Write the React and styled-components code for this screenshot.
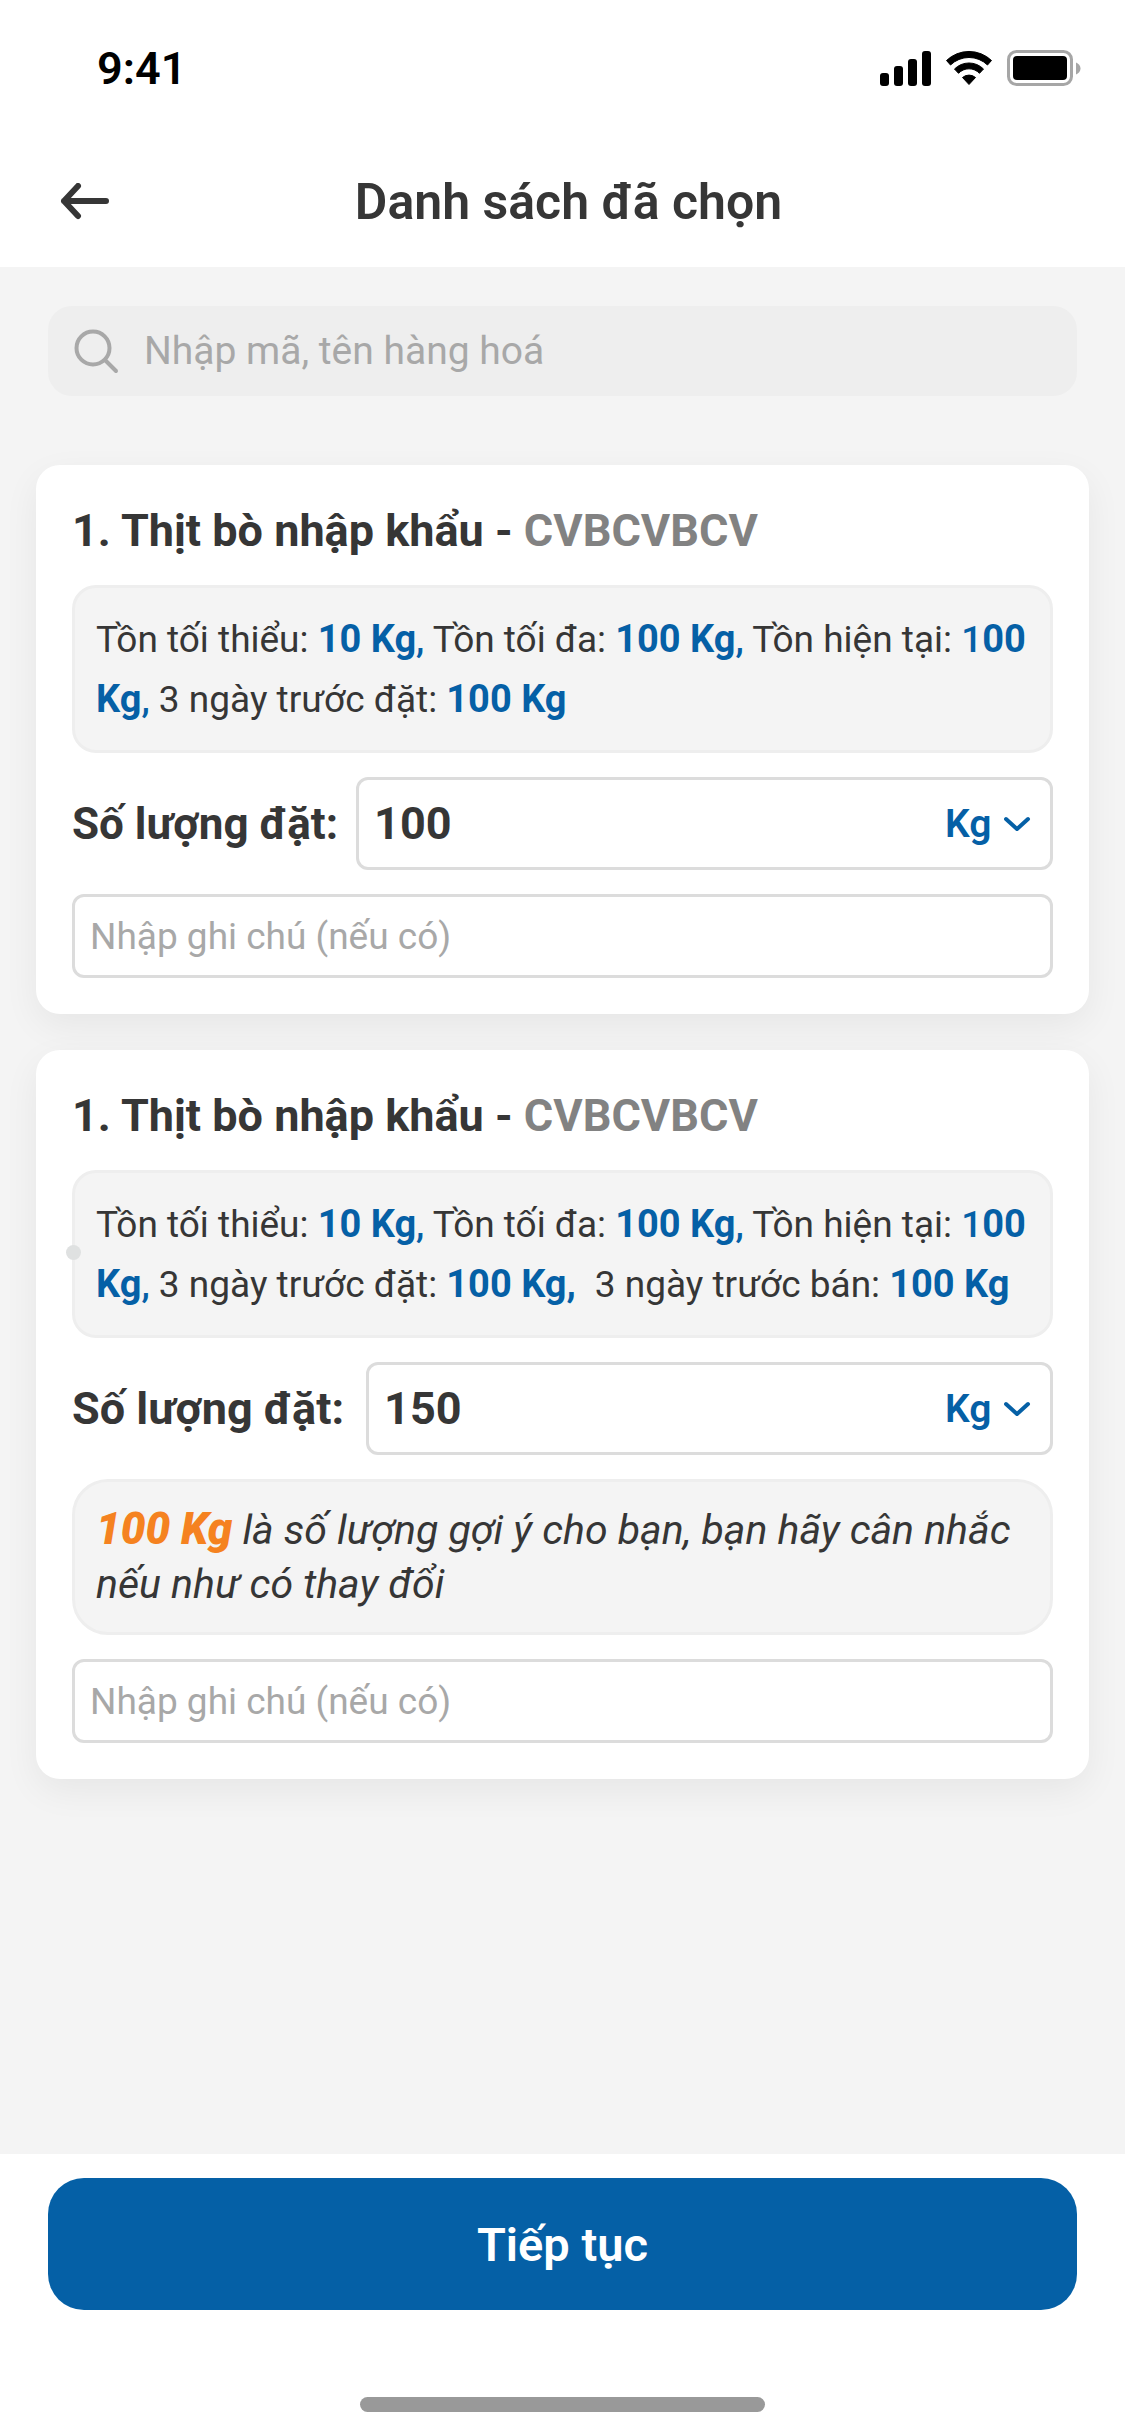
import React, { useState } from 'react'
import styled, { createGlobalStyle } from 'styled-components';

const products = [
  {
    id: 1,
    name: '1. Thịt bò nhập khẩu',
    code: 'CVBCVBCV',
    quantity: '100',
    stockSold: false,
    suggestion: '',
    marker: false,
  },
  {
    id: 2,
    name: '1. Thịt bò nhập khẩu',
    code: 'CVBCVBCV',
    quantity: '150',
    stockSold: true,
    suggestion: '100 Kg',
    marker: true,
  },
];

const StatusIcons = () => (
  <svg width="204" height="36" viewBox="0 0 204 36" aria-hidden="true">
    <rect x="1" y="23" width="9" height="13" rx="3" />
    <rect x="15" y="16" width="9" height="20" rx="3" />
    <rect x="29" y="9" width="9" height="27" rx="3" />
    <rect x="43" y="1" width="9" height="35" rx="3" />
    <path d="M67.5 10.5 A32.5 32.5 0 0 1 112.5 10.5 L108.5 15 A26.5 26.5 0 0 0 71.5 15 Z" strokeWidth="1" stroke="#000" strokeLinejoin="round" />
    <path d="M75.5 19 A20.5 20.5 0 0 1 104.5 19 L100.5 23.3 A14.5 14.5 0 0 0 79.5 23.3 Z" strokeWidth="1" stroke="#000" strokeLinejoin="round" />
    <path d="M83.5 27.5 A10 10 0 0 1 96.5 27.5 L90 34.5 Z" strokeWidth="1" stroke="#000" strokeLinejoin="round" />
    <rect x="129.5" y="1.5" width="63" height="33" rx="8" fill="none" stroke="#a6a6a6" strokeWidth="3" />
    <rect x="134" y="6" width="54" height="24" rx="4" />
    <path d="M197 12.5 C199.5 13.5 201.5 15.5 201.5 18.5 C201.5 21.5 199.5 23.5 197 24.5 Z" fill="#a6a6a6" />
  </svg>
);

const BackIcon = () => (
  <svg width="50" height="38" viewBox="0 0 50 38" fill="none" stroke="#363636" strokeWidth="6" strokeLinecap="round" strokeLinejoin="round" aria-hidden="true">
    <path d="M46 18 H4 M18 3 L4 18 L18 33" />
  </svg>
);

const SearchIcon = () => (
  <svg width="48" height="48" viewBox="0 0 48 48" fill="none" stroke="#a8a8a8" strokeWidth="4" strokeLinecap="round" aria-hidden="true">
    <circle cx="21" cy="21" r="16.5" />
    <path d="M33 33 L44 44" />
  </svg>
);

const ChevronIcon = () => (
  <svg width="28" height="18" viewBox="0 0 28 18" fill="none" stroke="#0560a6" strokeWidth="4" strokeLinecap="round" strokeLinejoin="round" aria-hidden="true">
    <path d="M2 4 L13 14 L24 4" />
  </svg>
);

const OneProduct = ({ id, name, code, quantity, stockSold, suggestion, marker }) => {
  const [amount, setAmount] = useState(quantity)
  return (
    <Card>
      <CardTitle>{name} - <span>{code}</span></CardTitle>
      <Stock>
        Tồn tối thiểu: <b>10 Kg</b><i>,</i> Tồn tối đa: <b>100 Kg</b><i>,</i> Tồn hiện tại: <i>1</i><b>00 Kg</b><i>,</i> 3 ngày trước đặt: <b>100 Kg</b>
        {stockSold && <><b>,&nbsp; </b>3 ngày trước bán: <b>100 Kg</b></>}
        {marker && <Marker />}
      </Stock>
      <QuantityRow $wide={Boolean(suggestion)}>
        <label htmlFor={`quantity-${id}`}>Số lượng đặt:</label>
        <QuantityBox>
          <input id={`quantity-${id}`} value={amount} onChange={(e) => setAmount(e.target.value)} />
          <select aria-label="Đơn vị" defaultValue="Kg">
            <option>Kg</option>
          </select>
          <ChevronIcon />
        </QuantityBox>
      </QuantityRow>
      {suggestion && (
        <Suggestion>
          <b>{suggestion}</b> là số lượng gợi ý cho bạn, bạn hãy cân nhắc nếu như có thay đổi
        </Suggestion>
      )}
      <Note aria-label="Ghi chú" placeholder="Nhập ghi chú (nếu có)" />
    </Card>
  )
}

const App = () => {
  return (
    <Screen>
      <GlobalStyle />
      <StatusBar>
        <span>9:41</span>
        <StatusIcons />
      </StatusBar>
      <NavBar>
        <button type="button" aria-label="Quay lại"><BackIcon /></button>
        <h1>Danh sách đã chọn</h1>
      </NavBar>
      <Content>
        <SearchBox>
          <SearchIcon />
          <input type="search" aria-label="Tìm kiếm" placeholder="Nhập mã, tên hàng hoá" />
        </SearchBox>
        <List>
          {products.map((product) => (
            <OneProduct key={product.id} {...product} />
          ))}
        </List>
      </Content>
      <Footer>
        <button type="button">Tiếp tục</button>
        <HomeIndicator />
      </Footer>
    </Screen>
  )
}

export default App

const GlobalStyle = createGlobalStyle`
  * {
    box-sizing: border-box;
  }

  body {
    margin: 0;
    background: #fff;
    color: #363636;
    font-family: Roboto, "Liberation Sans", sans-serif;
  }

  button,
  input,
  select {
    margin: 0;
    padding: 0;
    border: none;
    outline: none;
    background: none;
    color: inherit;
    font: inherit;
    appearance: none;
  }

  input::placeholder {
    color: #a8a8a8;
    opacity: 1;
  }
`;

const Screen = styled.div`
    display: flex;
    flex-direction: column;
    min-height: 100vh;
`;

const StatusBar = styled.div`
    display: flex;
    justify-content: space-between;
    align-items: center;
    height: 136px;
    padding: 0 42px 0 97px;
    color: #000;
    font-size: 45px;
    font-weight: 600;
`;

const NavBar = styled.header`
    display: grid;
    grid-template-columns: 50px 1fr 38px;
    align-items: center;
    height: 131px;
    padding: 0 60px;

  h1 {
    margin: 0;
    font-size: 50px;
    font-weight: 600;
    line-height: 60px;
    text-align: center;
  }

  button {
    display: flex;
  }
`;

const Content = styled.main`
    flex: 1;
    padding: 39px 36px;
    background: #f4f4f4;
`;

const SearchBox = styled.div`
    display: flex;
    align-items: center;
    gap: 24px;
    height: 90px;
    margin: 0 12px;
    padding: 0 24px;
    border-radius: 24px;
    background: #eee;
    font-size: 39px;

  input {
    flex: 1;
    min-width: 0;
  }
`;

const List = styled.div`
    display: flex;
    flex-direction: column;
    gap: 36px;
    margin-top: 69px;
`;

const Card = styled.section`
    display: flex;
    flex-direction: column;
    gap: 24px;
    padding: 36px;
    border-radius: 24px;
    background: #fff;
    box-shadow: 0 12px 36px rgba(0, 0, 0, 0.06);
`;

const CardTitle = styled.h2`
    margin: 0;
    font-size: 45px;
    font-weight: 700;
    line-height: 60px;

  span {
    color: #828282;
  }
`;

const Stock = styled.p`
    position: relative;
    margin: 0;
    padding: 22px 21px 20px;
    border: 3px solid #eee;
    border-radius: 24px;
    background: #f4f4f4;
    font-size: 37px;
    line-height: 60px;

  b,
  i {
    color: #0560a6;
    font-style: normal;
    font-weight: 700;
  }

  b {
    font-size: 38px;
    line-height: 1;
  }

  i {
    font-weight: 500;
  }
`;

const Marker = styled.span`
    position: absolute;
    left: -9px;
    top: 72px;
    width: 15px;
    height: 15px;
    border-radius: 50%;
    background: #dfe1e1;
`;

const QuantityRow = styled.div`
    display: flex;
    align-items: center;
    gap: ${({ $wide }) => ($wide ? '22px' : '18px')};
    font-size: 45px;
    font-weight: 700;

  label {
    font-size: ${({ $wide }) => ($wide ? '45px' : '44px')};
    white-space: nowrap;
  }
`;

const QuantityBox = styled.div`
    display: flex;
    flex: 1;
    align-items: center;
    gap: 12px;
    min-width: 0;
    height: 93px;
    padding: 0 18px 0 15px;
    border: 3px solid #dcdcdc;
    border-radius: 12px;

  input {
    flex: 1;
    min-width: 0;
  }

  select {
    color: #0560a6;
    font-size: 39px;
    font-weight: 600;
  }
`;

const Suggestion = styled.p`
    margin: 0;
    padding: 21px;
    border: 3px solid #eee;
    border-radius: 36px;
    background: #f4f4f4;
    font-size: 41px;
    font-style: italic;
    line-height: 54px;

  b {
    color: #f58220;
    font-size: 44px;
    font-weight: 900;
    line-height: 1;
  }
`;

const Note = styled.input`
    && {
      height: 84px;
      padding: 0 15px;
      border: 3px solid #dcdcdc;
      border-radius: 12px;
      font-size: 37px;
    }
`;

const Footer = styled.footer`
    display: flex;
    flex-direction: column;
    gap: 87px;
    padding: 24px 48px;
    background: #fff;

  button {
    height: 132px;
    border-radius: 36px;
    background: #0560a6;
    color: #fff;
    font-size: 47px;
    font-weight: 600;
  }
`;

const HomeIndicator = styled.div`
    align-self: center;
    width: 405px;
    height: 15px;
    border-radius: 8px;
    background: #999;
`;
